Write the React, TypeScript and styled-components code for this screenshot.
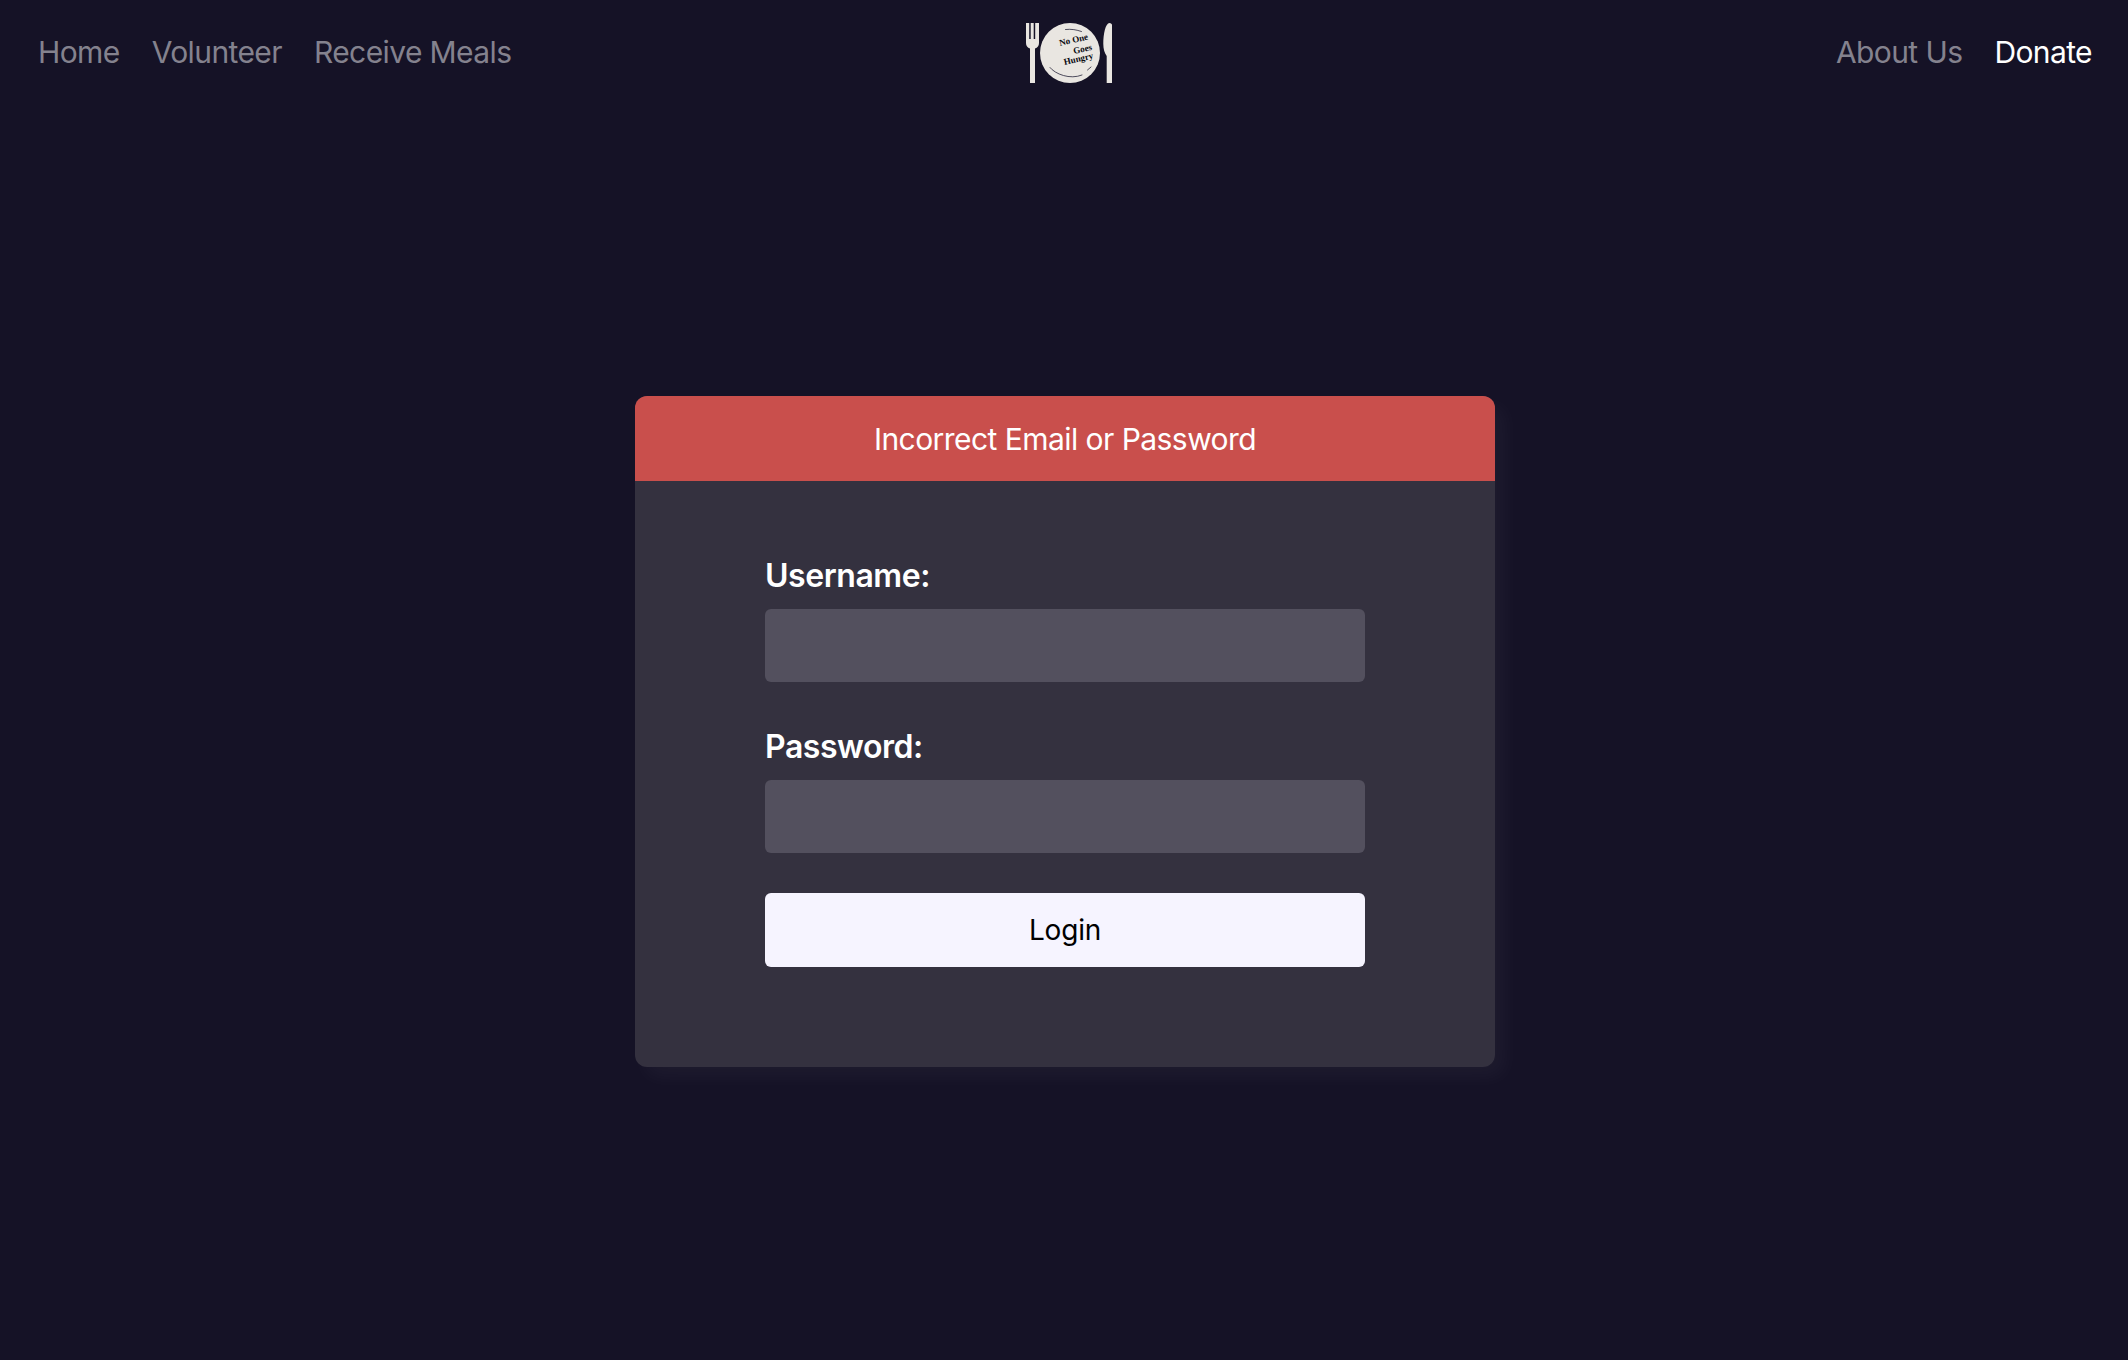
import React from "react";
import styled, { createGlobalStyle } from "styled-components";

const Global = createGlobalStyle`
  html, body { margin: 0; padding: 0; background: #151226; }
  * { box-sizing: border-box; }
  body { font-family: Inter, "Liberation Sans", sans-serif; }
`;

const Page = styled.div`
  height: 1360px;
  display: flex;
  flex-direction: column;
  background: #151226;
  overflow: hidden;
`;

const Nav = styled.nav`
  height: 103px;
  display: grid;
  grid-template-columns: 1fr auto 1fr;
  align-items: center;
  padding: 0 36px 0 38px;
`;

const NavGroup = styled.div<{ $end?: boolean }>`
  display: flex;
  gap: 32px;
  justify-content: ${(p) => (p.$end ? "flex-end" : "flex-start")};
`;

const NavLink = styled.a<{ $active?: boolean }>`
  font-size: 30px;
  line-height: 36px;
  letter-spacing: -0.6px;
  color: ${(p) => (p.$active ? "#ffffff" : "#84828e")};
  text-decoration: none;
`;

const LogoWrap = styled.div`
  width: 100px;
  height: 70px;
  margin: 7px -5px 0 5px;
  display: flex;
`;

const Main = styled.main`
  flex: 1;
  display: flex;
  align-items: center;
  justify-content: center;
  padding-left: 2px;
`;

const Card = styled.section`
  width: 860px;
  height: 671px;
  background: #34313f;
  border-radius: 12px;
  overflow: hidden;
`;

const CardWrap = styled.div`
  border-radius: 12px;
  box-shadow: 10px 10px 20px rgba(255, 255, 255, 0.04);
`;

const Alert = styled.div`
  height: 85px;
  background: #c94f4c;
  color: #fff;
  font-size: 30px;
  letter-spacing: -0.55px;
  display: flex;
  align-items: center;
  justify-content: center;
`;

const Form = styled.form`
  padding: 75px 130px 0;
  display: flex;
  flex-direction: column;
`;

const Label = styled.label`
  font-size: 32px;
  line-height: 40px;
  font-weight: 600;
  letter-spacing: -0.45px;
  color: #fff;
  margin-bottom: 13px;
`;

const Input = styled.input`
  height: 73px;
  border: none;
  border-radius: 6px;
  background: #53505e;
  margin-bottom: 45px;
  display: block;
  width: 100%;
  &:last-of-type { margin-bottom: 40px; }
`;

const LoginButton = styled.button`
  height: 74px;
  border: none;
  border-radius: 6px;
  background: #f6f4ff;
  color: #000;
  font-family: inherit;
  font-size: 28px;
  letter-spacing: -0.2px;
`;

const Logo = () => (
  <svg width="100" height="70" viewBox="0 0 100 70" fill="#e9e6e1">
    <path d="M6 3h3.200v16h1.500V3h3v16h1.500V3H19v20c0 3-1.500 4.500-4 5.500V63h-5V28.500C7.500 27.500 6 26 6 23z" />
    <path d="M89.500 3C91 3 92 4 92 5v58h-5.300V36C84.500 33 83.300 29 83.300 24 83.300 14 85.500 3 89.500 3z" />
    <circle cx="50" cy="33" r="30" />
    <g fill="none" stroke="#26243a" strokeWidth="0.8" strokeLinecap="round">
      <path d="M30 47.500C35 54 50 60 62 55" />
      <path d="M67.500 50l3.500-3" />
      <path d="M45.500 9.500c6-.7 11 .3 16 2" />
    </g>
    <g fill="#0a0a10" fontFamily="'Liberation Serif', serif" fontWeight="700" fontSize="9">
      <text x="40" y="26" transform="rotate(-13 40 26)">No One</text>
      <text x="54" y="34" transform="rotate(-13 54 34)">Goes</text>
      <text x="44.500" y="45" transform="rotate(-13 44.500 45)">Hungry</text>
    </g>
  </svg>
);

export default function App() {
  return (
    <Page>
      <Global />
      <Nav>
        <NavGroup>
          <NavLink>Home</NavLink>
          <NavLink>Volunteer</NavLink>
          <NavLink>Receive Meals</NavLink>
        </NavGroup>
        <LogoWrap>
          <Logo />
        </LogoWrap>
        <NavGroup $end>
          <NavLink>About Us</NavLink>
          <NavLink $active>Donate</NavLink>
        </NavGroup>
      </Nav>
      <Main>
        <CardWrap>
          <Card>
            <Alert>Incorrect Email or Password</Alert>
            <Form onSubmit={(e) => e.preventDefault()}>
              <Label>Username:</Label>
              <Input type="text" />
              <Label>Password:</Label>
              <Input type="password" />
              <LoginButton type="submit">Login</LoginButton>
            </Form>
          </Card>
        </CardWrap>
      </Main>
    </Page>
  );
}
